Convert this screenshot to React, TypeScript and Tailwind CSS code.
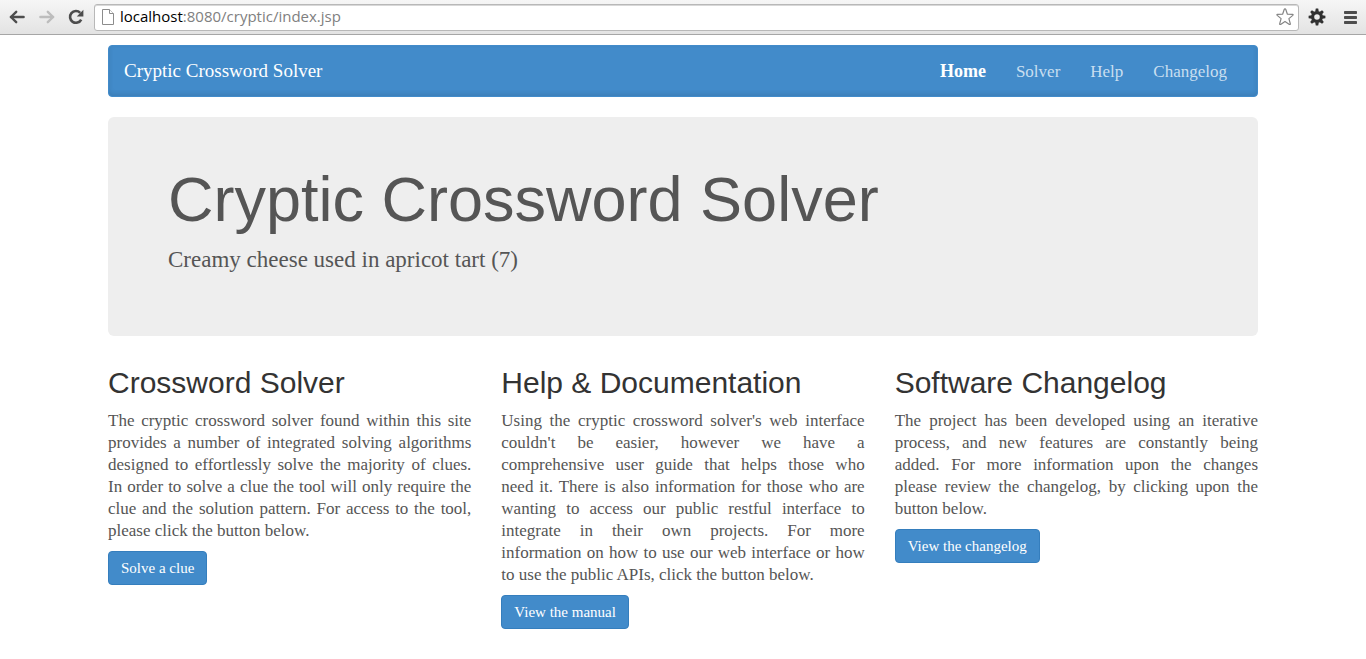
const navLinks = ['Solver', 'Help', 'Changelog'];

const features = [
  {
    title: 'Crossword Solver',
    text: 'The cryptic crossword solver found within this site provides a number of integrated solving algorithms designed to effortlessly solve the majority of clues. In order to solve a clue the tool will only require the clue and the solution pattern. For access to the tool, please click the button below.',
    action: 'Solve a clue',
  },
  {
    title: 'Help & Documentation',
    text: "Using the cryptic crossword solver's web interface couldn't be easier, however we have a comprehensive user guide that helps those who need\u00a0it. There is also information for those who are wanting to access our public restful interface to integrate in their own projects. For more information\u00a0on how to use our web interface or how to\u00a0use the public APIs, click the button below.",
    action: 'View the manual',
  },
  {
    title: 'Software Changelog',
    text: 'The project has been developed using an iterative process, and new features are constantly being added. For more information upon the changes please review the changelog, by clicking upon the button below.',
    action: 'View the changelog',
  },
];

function ArrowIcon({ className }: { className: string }) {
  return (
    <svg viewBox="0 0 16 14" className={className} fill="none" stroke="currentColor" aria-hidden="true">
      <path d="M2 7H14.5" strokeWidth="2.6" strokeLinecap="round" />
      <path d="M7.2 1.8L2 7L7.2 12.2" strokeWidth="2.4" strokeLinecap="round" strokeLinejoin="round" />
    </svg>
  );
}

function BrowserBar() {
  return (
    <div className="flex h-[35px] items-center border-b border-[#a6a6a6] bg-linear-to-b from-[#f6f6f6] to-[#e3e3e3] pr-[9px] pl-[9px]">
      <button type="button" aria-label="Back" className="text-[#4d4d4d]">
        <ArrowIcon className="h-[14px] w-4" />
      </button>
      <button type="button" aria-label="Forward" className="ml-[14px] text-[#bdbdbd]">
        <ArrowIcon className="h-[14px] w-4 rotate-180" />
      </button>
      <button type="button" aria-label="Reload" className="ml-[13px] text-[#4d4d4d]">
        <svg viewBox="0 0 16 16" className="size-4" aria-hidden="true">
          <path d="M12.2 3.8A5.9 5.9 0 1 0 13.2 10.6" fill="none" stroke="currentColor" strokeWidth="2.6" />
          <path d="M15.4 .8V7.4H8.8Z" fill="currentColor" />
        </svg>
      </button>
      <div className="ml-2.5 flex h-[27px] flex-1 items-center rounded-[3px] border border-[#b8b8b8] bg-white pr-1 pl-[7px] shadow-[inset_0_1px_0_#d8d8d8]">
        <svg viewBox="0 0 12 16" className="h-4 w-3" fill="#fff" stroke="#8c8c8c" strokeLinejoin="round" aria-hidden="true">
          <path d="M.5 .5H7.5L11.5 4.5V15.5H.5Z" />
          <path d="M7.5 .5V4.5H11.5" />
        </svg>
        <div className="ml-1.5 flex-1 pb-0.5 font-['Open_Sans',sans-serif] text-[15px] leading-5 text-[#808080]">
          <span className="text-black">localhost</span>:8080/cryptic/index.jsp
        </div>
        <button type="button" aria-label="Bookmark this page">
          <svg viewBox="0 0 18 18" className="size-[18px]" fill="#fff" stroke="#858585" strokeWidth="1.2" strokeLinejoin="round" aria-hidden="true">
            <path d="M9 .9Q9.6 .9 9.8 1.5L11.4 6.2L16.5 6.4Q17.6 6.6 16.8 7.4L12.9 10.6L14.3 15.7Q14.4 16.8 13.4 16.4L9 13.5L4.6 16.4Q3.6 16.8 3.7 15.7L5.1 10.6L1.2 7.4Q.4 6.6 1.5 6.4L6.6 6.2L8.2 1.5Q8.4 .9 9 .9Z" />
          </svg>
        </button>
      </div>
      <button type="button" aria-label="Settings" className="ml-[9px] text-[#303030]">
        <svg viewBox="-9 -9 18 18" className="size-[18px]" aria-hidden="true">
          <circle r="4.4" fill="none" stroke="currentColor" strokeWidth="3.2" />
          <g fill="currentColor">
            {[0, 45, 90, 135, 180, 225, 270, 315].map((angle) => (
              <path key={angle} d="M-1.8 -5.2L-1.2 -8.4H1.2L1.8 -5.2Z" transform={`rotate(${angle})`} />
            ))}
          </g>
        </svg>
      </button>
      <button type="button" aria-label="Menu" className="ml-[17px] text-[#4d4d4d]">
        <svg viewBox="0 0 14 14" className="size-[14px]" aria-hidden="true">
          <g fill="currentColor">
            <rect x="1" y="1" width="13" height="3" rx=".8" />
            <rect x="1" y="6" width="13" height="3" rx=".8" />
            <rect x="1" y="11" width="13" height="3" rx=".8" />
          </g>
        </svg>
      </button>
    </div>
  );
}

export default function App() {
  return (
    <div className="bg-white font-['Liberation_Serif',serif] text-[17px] leading-[22px] text-[#555]">
      <BrowserBar />
      <div className="mx-auto max-w-[1190px] px-5 pt-2.5">
        <nav className="flex h-[52px] items-center justify-between rounded border border-[#428bca] bg-[#428bca] px-[15px] shadow-[inset_0_-2px_5px_rgba(0,0,0,0.1)]">
          <a href="#" className="text-[19px] text-white">
            Cryptic Crossword Solver
          </a>
          <ul className="flex items-baseline gap-[30px] pr-[15px] text-[17px] text-[#c9dff0]">
            <li>
              <a href="#" className="text-lg leading-[22px] font-bold text-white">
                Home
              </a>
            </li>
            {navLinks.map((label) => (
              <li key={label}>
                <a href="#">{label}</a>
              </li>
            ))}
          </ul>
        </nav>

        <header className="mt-5 rounded-md bg-[#eee] px-[60px] pt-12 pb-[60px]">
          <h1 className="font-['Liberation_Sans',sans-serif] text-[63px] leading-[69px]">Cryptic Crossword Solver</h1>
          <p className="mt-[9px] text-[23px] leading-[33px]">Creamy cheese used in apricot tart (7)</p>
        </header>

        <main className="mt-[30px] grid grid-cols-3 gap-[30px] pb-[30px]">
          {features.map((feature) => (
            <section key={feature.title}>
              <h2 className="font-['Liberation_Sans',sans-serif] text-[30px] leading-[33px] text-[#333]">
                {feature.title}
              </h2>
              <p className="mt-[11px] text-justify">{feature.text}</p>
              <a
                href="#"
                className="mt-[9px] inline-block rounded border border-[#357ebd] bg-[#428bca] px-3 py-1.5 text-[15px] leading-5 text-white"
              >
                {feature.action}
              </a>
            </section>
          ))}
        </main>
      </div>
    </div>
  );
}
